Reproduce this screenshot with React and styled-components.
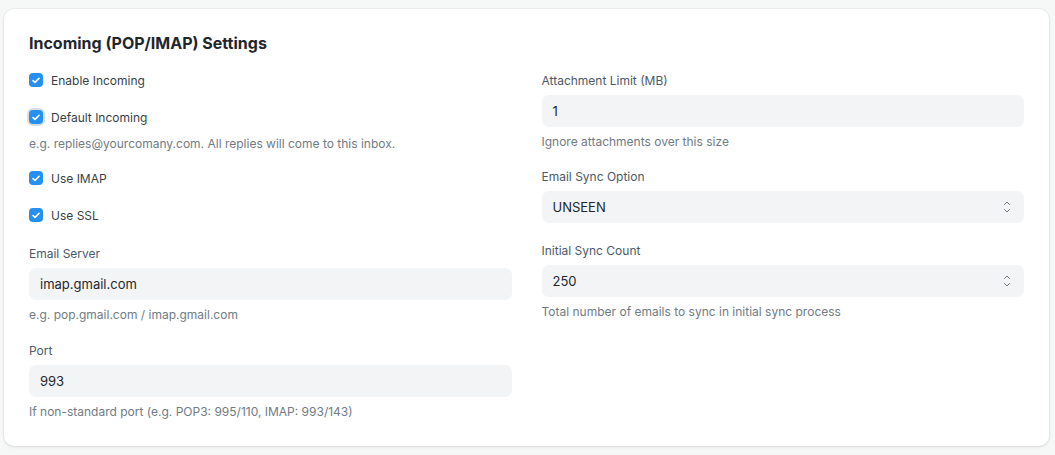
import React from "react";
import styled, { createGlobalStyle } from "styled-components";

const GlobalStyle = createGlobalStyle`
  body {
    margin: 0;
    background: #f6f7f7;
    font-family: Inter, "Noto Sans", sans-serif;
    color: #1f272e;
  }
`;

const Page = styled.div`
  padding: 9px 6px 9px 4px;
`;

const Card = styled.section`
  background: #fff;
  border-radius: 10px;
  box-shadow: 0 0 0 1px rgba(0, 0, 0, 0.03), 0 1px 3px rgba(0, 0, 0, 0.1);
  padding: 24px 25px 26px 25px;
  height: 437px;
  box-sizing: border-box;
`;

const Title = styled.h3`
  margin: 0 0 7px;
  font-size: 16px;
  line-height: 20px;
  font-weight: 700;
  color: #1f272e;
`;

const Columns = styled.div`
  display: grid;
  grid-template-columns: 1fr 1fr;
  column-gap: 30px;
`;

const Column = styled.div`
  display: flex;
  flex-direction: column;
  padding-top: ${(p) => p.$top || 0}px;
`;

const Field = styled.div`
  margin-bottom: ${(p) => (p.$mb != null ? p.$mb : 18)}px;
`;

const CheckRow = styled.label`
  display: flex;
  align-items: center;
  gap: 8px;
  height: 20px;
  font-size: 12px;
  color: #383f46;
`;

const Box = styled.span`
  width: 14px;
  height: 14px;
  border-radius: 4px;
  background: #2490ef;
  display: flex;
  align-items: center;
  justify-content: center;
  box-shadow: ${(p) => (p.$focus ? "0 0 0 2px #d8dde2" : "none")};
`;

const Label = styled.div`
  font-size: 12px;
  line-height: 16px;
  color: #4c5a67;
  margin-bottom: 6px;
`;

const Input = styled.div`
  height: 32px;
  border-radius: 7px;
  background: #f3f4f5;
  display: flex;
  align-items: center;
  justify-content: space-between;
  padding: 0 12px 0 11px;
  font-size: 13px;
  color: #1f272e;
`;

const Help = styled.div`
  font-size: 12px;
  line-height: 18px;
  color: #717b84;
  margin-top: ${(p) => p.$mt || 6}px;
`;

const Check = () => (
  <svg width="8" height="7" viewBox="0 0 8 7" fill="none">
    <path d="M1 3.6 L3 5.4 L7 1.4" stroke="#fff" strokeWidth="1.5" strokeLinecap="round" strokeLinejoin="round" />
  </svg>
);

const Chevrons = () => (
  <svg width="10" height="16" viewBox="0 0 10 16" fill="none">
    <path d="M2.5 5.5 L5 3 L7.5 5.5" stroke="#6d7780" strokeWidth="1" strokeLinecap="round" strokeLinejoin="round" />
    <path d="M2.5 10.5 L5 13 L7.5 10.5" stroke="#6d7780" strokeWidth="1" strokeLinecap="round" strokeLinejoin="round" />
  </svg>
);

const CheckField = ({ label, focus, help, mb }) => (
  <Field $mb={mb != null ? mb : 17}>
    <CheckRow>
      <Box $focus={focus}>
        <Check />
      </Box>
      {label}
    </CheckRow>
    {help && <Help $mt={8}>{help}</Help>}
  </Field>
);

const TextField = ({ label, value, help, select, mb }) => (
  <Field $mb={mb}>
    <Label>{label}</Label>
    <Input>
      <span>{value}</span>
      {select && <Chevrons />}
    </Input>
    {help && <Help>{help}</Help>}
  </Field>
);

export default function App() {
  return (
    <Page>
      <GlobalStyle />
      <Card>
        <Title>Incoming (POP/IMAP) Settings</Title>
        <Columns>
          <Column $top={10}>
            <CheckField label="Enable Incoming" />
            <CheckField
              label="Default Incoming"
              focus
              help="e.g. replies@yourcomany.com. All replies will come to this inbox."
              mb={15}
            />
            <CheckField label="Use IMAP" />
            <CheckField label="Use SSL" mb={21} />
            <TextField
              label="Email Server"
              value="imap.gmail.com"
              help="e.g. pop.gmail.com / imap.gmail.com"
              mb={19}
            />
            <TextField
              label="Port"
              value="993"
              help="If non-standard port (e.g. POP3: 995/110, IMAP: 993/143)"
              mb={0}
            />
          </Column>
          <Column $top={13}>
            <TextField
              label="Attachment Limit (MB)"
              value="1"
              help="Ignore attachments over this size"
              mb={18}
            />
            <TextField label="Email Sync Option" value="UNSEEN" select mb={20} />
            <TextField
              label="Initial Sync Count"
              value="250"
              select
              help="Total number of emails to sync in initial sync process"
              mb={0}
            />
          </Column>
        </Columns>
      </Card>
    </Page>
  );
}
